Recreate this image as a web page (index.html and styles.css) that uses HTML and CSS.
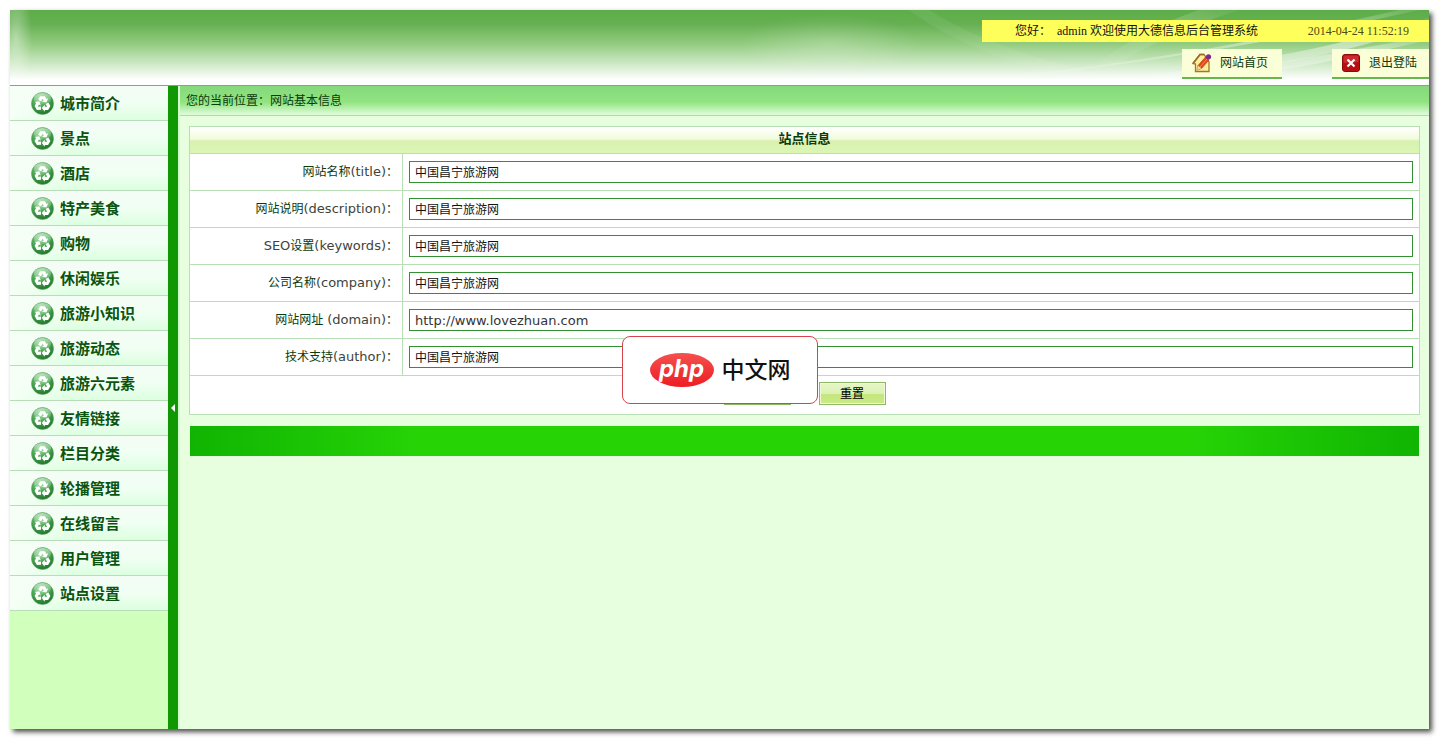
FILE: index.html
```html
<!DOCTYPE html>
<html lang="zh-CN">
<head>
  <meta charset="UTF-8" />
  <meta name="viewport" content="width=device-width, initial-scale=1.0" />
  <title>大德信息后台管理系统</title>
  <link rel="stylesheet" href="styles.css">
</head>
<body>
  <svg class="defs" width="0" height="0" aria-hidden="true">
    <defs>
      <radialGradient id="ball" cx="0.4" cy="0.25" r="0.8">
        <stop offset="0" stop-color="#8fd694" />
        <stop offset="0.55" stop-color="#46a24d" />
        <stop offset="1" stop-color="#1c6d25" />
      </radialGradient>
      <linearGradient id="gloss" x1="0" y1="0" x2="0" y2="1">
        <stop offset="0" stop-color="#fff" stop-opacity="0.5" />
        <stop offset="1" stop-color="#fff" stop-opacity="0.1" />
      </linearGradient>
    </defs>
    <symbol id="recycle" viewBox="0 0 23 23">
      <circle cx="11.5" cy="11.5" r="11" fill="url(#ball)" stroke="#5aa765" stroke-width="0.6" />
      <ellipse cx="11.5" cy="6.5" rx="8.6" ry="5.5" fill="url(#gloss)" />
      <g fill="#fff">
        <g id="arrow">
          <path d="M7.2 7.8 L9.2 4.2 H13.8 L15.6 7 L17.2 6.2 L15.4 10.6 L11 9.8 L12.8 8.6 L11.5 6.6 L10 9.4 Z" />
        </g>
        <use href="#arrow" transform="rotate(120 11.5 12)" />
        <use href="#arrow" transform="rotate(240 11.5 12)" />
      </g>
    </symbol>
  </svg>

  <div class="frame">
    <header class="header">
      <svg class="rays" viewBox="0 0 520 75" preserveAspectRatio="none" aria-hidden="true">
        <defs>
          <linearGradient id="ray" x1="0" y1="1" x2="1" y2="0">
            <stop offset="0" stop-color="#fff" stop-opacity="0" />
            <stop offset="0.7" stop-color="#fff" stop-opacity="0.45" />
            <stop offset="1" stop-color="#fff" stop-opacity="0.1" />
          </linearGradient>
        </defs>
        <path d="M40 75 Q290 50 510 0 H490 Q270 52 20 75 Z" fill="url(#ray)" />
        <path d="M120 75 Q360 60 520 8 V14 Q380 66 160 75 Z" fill="url(#ray)" />
        <path d="M240 75 Q400 48 520 26 V30 Q410 56 280 75 Z" fill="url(#ray)" />
        <path d="M180 60 Q230 20 290 0 H330 Q250 26 200 60 Z" fill="url(#ray)" opacity="0.4" />
        <path d="M0 0 Q60 45 180 75 H240 Q90 45 20 0 Z" fill="url(#ray)" opacity="0.2" />
      </svg>
      <div class="welcome">
        <p>您好： &nbsp;admin 欢迎使用大德信息后台管理系统</p>
        <time datetime="2014-04-24T11:52:19">2014-04-24 11:52:19</time>
      </div>
      <nav class="top-links">
        <a class="top-link" href="#">
          <svg width="20" height="20" viewBox="0 0 20 20" aria-hidden="true">
            <path d="M1 10.500 L8 1.500 H12 L17 9 V18.500 H3.500 V11 Z" fill="#fff0a0" stroke="#a8741c" stroke-width="1.300" />
            <path d="M1 10.500 L8 1.500 H12" fill="none" stroke="#9c6a28" stroke-width="1.600" />
            <path d="M5 17 L6 12.500 L13.500 4 L17 7 L9.500 15.500 Z" fill="#e2471c" stroke="#b8380f" stroke-width="0.600" />
            <path d="M5 17 L6 12.500 L9.500 15.500 Z" fill="#f8d9a0" />
            <path d="M8 14 L15 6" stroke="#f58a4c" />
            <circle cx="16.500" cy="3.800" r="2.600" fill="#7a2b8c" />
          </svg>
          网站首页
        </a>
        <a class="top-link" href="#">
          <svg width="18" height="18" viewBox="0 0 18 18" aria-hidden="true">
            <rect x="0.5" y="0.5" width="17" height="17" rx="2.5" fill="#b50f14" stroke="#8a0b0e" />
            <path d="M1.5 9 V3 Q1.5 1.5 3 1.5 H15 Q16.5 1.5 16.5 3 V8 Z" fill="#cc2a2c" />
            <path d="M5.5 5.5 L12.5 12.5 M12.5 5.5 L5.5 12.5" stroke="#fff" stroke-width="2.2" />
          </svg>
          退出登陆
        </a>
      </nav>
    </header>

    <div class="main">
      <nav class="sidebar">
        <a href="#"><svg class="icon"><use href="#recycle" /></svg>城市简介</a>
        <a href="#"><svg class="icon"><use href="#recycle" /></svg>景点</a>
        <a href="#"><svg class="icon"><use href="#recycle" /></svg>酒店</a>
        <a href="#"><svg class="icon"><use href="#recycle" /></svg>特产美食</a>
        <a href="#"><svg class="icon"><use href="#recycle" /></svg>购物</a>
        <a href="#"><svg class="icon"><use href="#recycle" /></svg>休闲娱乐</a>
        <a href="#"><svg class="icon"><use href="#recycle" /></svg>旅游小知识</a>
        <a href="#"><svg class="icon"><use href="#recycle" /></svg>旅游动态</a>
        <a href="#"><svg class="icon"><use href="#recycle" /></svg>旅游六元素</a>
        <a href="#"><svg class="icon"><use href="#recycle" /></svg>友情链接</a>
        <a href="#"><svg class="icon"><use href="#recycle" /></svg>栏目分类</a>
        <a href="#"><svg class="icon"><use href="#recycle" /></svg>轮播管理</a>
        <a href="#"><svg class="icon"><use href="#recycle" /></svg>在线留言</a>
        <a href="#"><svg class="icon"><use href="#recycle" /></svg>用户管理</a>
        <a href="#"><svg class="icon"><use href="#recycle" /></svg>站点设置</a>
      </nav>
      <button class="splitter" type="button">
        <svg width="4" height="8" viewBox="0 0 4 8" aria-hidden="true"><path d="M4 0 V8 L0 4 Z" fill="#fff" /></svg>
      </button>

      <main class="content">
        <div class="crumb">您的当前位置：网站基本信息</div>
        <form class="panel">
          <h1 class="panel-title">站点信息</h1>
          <div class="row">
            <label for="title">网站名称<span class="en">(title)</span>：</label>
            <div class="field"><input type="text" id="title" value="中国昌宁旅游网"></div>
          </div>
          <div class="row">
            <label for="description">网站说明<span class="en">(description)</span>：</label>
            <div class="field"><input type="text" id="description" value="中国昌宁旅游网"></div>
          </div>
          <div class="row">
            <label for="keywords"><span class="en">SEO</span>设置<span class="en">(keywords)</span>：</label>
            <div class="field"><input type="text" id="keywords" value="中国昌宁旅游网"></div>
          </div>
          <div class="row">
            <label for="company">公司名称<span class="en">(company)</span>：</label>
            <div class="field"><input type="text" id="company" value="中国昌宁旅游网"></div>
          </div>
          <div class="row">
            <label for="domain">网站网址 <span class="en">(domain)</span>：</label>
            <div class="field"><input class="en" type="text" id="domain" value="http://www.lovezhuan.com"></div>
          </div>
          <div class="row">
            <label for="author">技术支持<span class="en">(author)</span>：</label>
            <div class="field"><input type="text" id="author" value="中国昌宁旅游网"></div>
          </div>
          <div class="actions">
            <button class="btn" type="submit"></button>
            <button class="btn" type="reset">重置</button>
          </div>
        </form>
        <div class="footer-bar"></div>
      </main>
    </div>
  </div>

  <div class="badge">
    <span class="badge-php">php</span>
    <span>中文网</span>
  </div>
</body>
</html>
```
FILE: styles.css
```css
* {
  margin: 0;
  padding: 0;
  box-sizing: border-box;
}
body {
  min-height: 100vh;
  padding: 10px 11px 11px 10px;
  display: flex;
  background: #fff;
  font-family: "DejaVu Sans", "Noto Sans CJK SC", sans-serif;
  font-size: 12px;
  line-height: 18px;
  color: #0c3a0c;
}
a {
  color: inherit;
  text-decoration: none;
}
.defs {
  position: absolute;
}
.frame {
  flex: 1;
  display: flex;
  flex-direction: column;
  box-shadow: 3px 3px 5px rgba(0, 0, 0, 0.7);
}

/* header */
.header {
  position: relative;
  height: 76px;
  padding-top: 10px;
  display: flex;
  flex-direction: column;
  align-items: flex-end;
  gap: 7px;
  border-bottom: 1px solid #7fae62;
  background:
    radial-gradient(ellipse 16px 60px at 6px 30px, rgba(255, 255, 255, 0.4), transparent),
    radial-gradient(ellipse 90px 30px at 820px 34px, rgba(255, 255, 255, 0.2), transparent),
    linear-gradient(#5dad49 0, #66b052 14px, #93cc81 34px, #c9e6bf 52px, #fff 70px);
  font-family: "Liberation Serif", "Noto Sans CJK SC", serif;
}
.rays {
  position: absolute;
  top: 0;
  right: 0;
  width: 520px;
  height: 75px;
}
.welcome {
  position: relative;
  width: 447px;
  height: 22px;
  padding: 0 20px 0 33px;
  display: flex;
  justify-content: space-between;
  align-items: center;
  background: #ffff5c;
  color: #111;
}
.welcome time {
  color: #4c4c10;
}
.top-links {
  position: relative;
  display: flex;
  gap: 50px;
}
.top-link {
  height: 30px;
  padding: 0 12px 0 10px;
  display: flex;
  align-items: center;
  gap: 9px;
  background: #fbffd8;
  border-bottom: 2px solid #64b850;
}
.top-link:first-child {
  padding-right: 14px;
  gap: 8px;
}

/* left menu */
.main {
  flex: 1;
  display: flex;
}
.sidebar {
  width: 158px;
  background: #d1ffbc;
}
.sidebar a {
  height: 35px;
  padding: 1px 0 0 21px;
  display: flex;
  align-items: center;
  gap: 6px;
  border-bottom: 1px solid #b9dcb9;
  background:
    linear-gradient(90deg, #f6fff6 0, rgba(246, 255, 246, 0) 60px),
    linear-gradient(#f4fcf6, #f1fff3 50%, #dcffe0);
  color: #0b5410;
  font-size: 15px;
  font-weight: bold;
}
.icon {
  width: 23px;
  height: 23px;
}
.splitter {
  width: 10px;
  display: flex;
  align-items: center;
  justify-content: center;
  border: none;
  background: #109803;
  cursor: pointer;
}

/* content */
.content {
  flex: 1;
  border-left: 2px solid #d2fbd0;
  background: #e7ffdf;
}
.crumb {
  height: 30px;
  padding: 6px;
  border-bottom: 1px solid #b4d8b0;
  background: linear-gradient(#86d87c, #90e480 16px, #dbfad5 28px);
}
.panel {
  margin: 10px 9px 11px;
  border: 1px solid #b9dfb6;
  background: #fff;
}
.panel-title {
  height: 27px;
  padding-top: 3px;
  border-bottom: 1px solid #b9dfb6;
  background: linear-gradient(#fff 0, #f1fcdc 12px, #d8f0b0 14px, #dbf7b4 26px);
  text-align: center;
  font-size: 13px;
}
.row {
  height: 37px;
  display: flex;
  border-bottom: 1px solid #b9dfb6;
}
.row label {
  width: 213px;
  padding: 9px 4px 0 0;
  border-right: 1px solid #b9dfb6;
  text-align: right;
}
.row label .en {
  font-size: 13px;
  color: #3c443c;
}
.field {
  flex: 1;
  padding: 7px 6px;
}
.field input {
  display: block;
  width: 100%;
  height: 22px;
  padding: 0 5px 2px;
  border: 1px solid #339133;
  background: #fff;
  font: inherit;
  color: #111;
}
.field input.en {
  padding-bottom: 0;
  font-size: 13px;
  color: #333;
}
.actions {
  padding: 6px 0 9px;
  display: flex;
  justify-content: center;
  gap: 28px;
}
.btn {
  width: 67px;
  height: 23px;
  border: 1px solid #8fb866;
  box-shadow: inset 0 0 0 1px #eff9d8;
  background: linear-gradient(#e6f6c6 0, #dcf2b4 50%, #c4e67c 51%, #cbea88 100%);
  font: inherit;
  color: #000;
}
.footer-bar {
  height: 30px;
  margin: 0 10px;
  background: linear-gradient(90deg, #10b402, #26d406 230px, #26d406 calc(100% - 230px), #10b402);
}

/* floating badge */
.badge {
  position: fixed;
  top: 50%;
  left: 50%;
  width: 196px;
  height: 68px;
  transform: translate(-50%, -50%);
  display: flex;
  align-items: center;
  justify-content: center;
  gap: 8px;
  border: 1px solid #d8434b;
  border-radius: 8px;
  background: #fff;
  color: #111;
  font-size: 23px;
  font-weight: 500;
}
.badge-php {
  width: 64px;
  height: 34px;
  border-radius: 50%;
  background: linear-gradient(#f4514f, #ee1c22);
  color: #fff;
  font-family: Inter, sans-serif;
  font-size: 24px;
  font-style: italic;
  font-weight: bold;
  line-height: 32px;
  text-align: center;
}
```
